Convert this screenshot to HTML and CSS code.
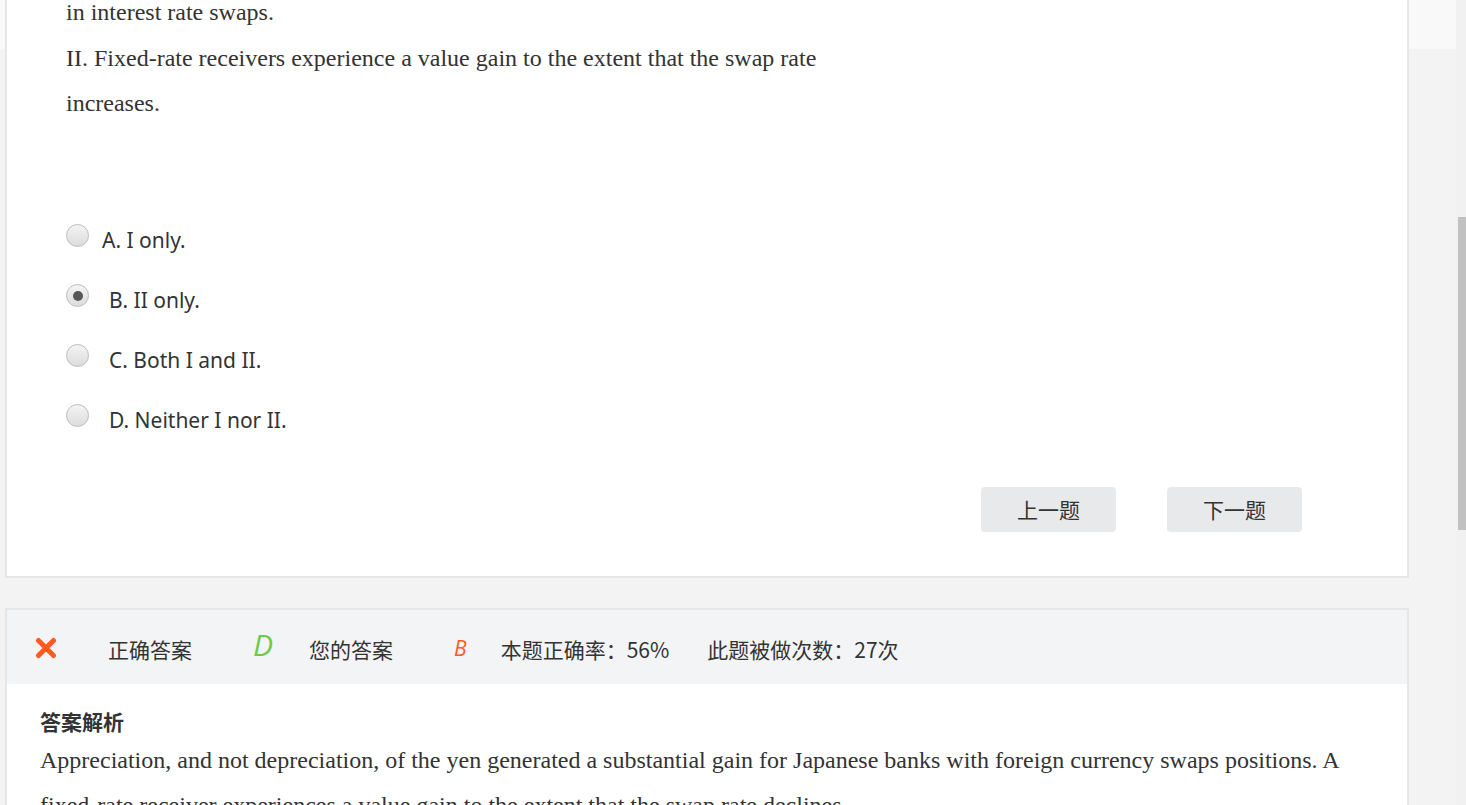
FILE: index.html
```html
<!DOCTYPE html>
<html lang="zh-CN">
<head>
    <meta charset="UTF-8">
    <meta name="viewport" content="width=device-width, initial-scale=1.0">
    <title>练习题</title>
    <link rel="stylesheet" href="styles.css">
</head>
<body>
    <div class="page">
        <!-- 题目 -->
        <div class="quiz-card">
            <div class="question">
                <p>in interest rate swaps.</p>
                <p>II. Fixed-rate receivers experience a value gain to the extent that the swap rate</p>
                <p>increases.</p>
            </div>

            <ul class="options">
                <li><span class="radio"></span><span class="opt-text">A. I only.</span></li>
                <li><span class="radio checked"></span><span class="opt-text pad">B. II only.</span></li>
                <li><span class="radio"></span><span class="opt-text pad">C. Both I and II.</span></li>
                <li><span class="radio"></span><span class="opt-text pad">D. Neither I nor II.</span></li>
            </ul>

            <div class="nav-buttons">
                <button class="nav-btn">上一题</button>
                <button class="nav-btn">下一题</button>
            </div>
        </div>

        <!-- 答案 -->
        <div class="answer-card">
            <div class="answer-bar">
                <span class="wrong-icon">
                    <svg width="22" height="22" viewBox="0 0 22 22">
                        <path d="M3.5 3.5 L18.5 18.5 M18.5 3.5 L3.5 18.5" stroke="#ff5a1f" stroke-width="5" stroke-linecap="round"/>
                    </svg>
                </span>
                <span class="bar-label">正确答案</span>
                <span class="right-answer">D</span>
                <span class="bar-label mine">您的答案</span>
                <span class="my-answer">B</span>
                <span class="bar-stat">本题正确率：56%</span>
                <span class="bar-stat">此题被做次数：27次</span>
            </div>
            <div class="analysis">
                <h3>答案解析</h3>
                <p>Appreciation, and not depreciation, of the yen generated a substantial gain for Japanese banks with foreign currency swaps positions. A fixed-rate receiver experiences a value gain to the extent that the swap rate declines.</p>
            </div>
        </div>
    </div>

    <div class="scroll-track"><div class="scroll-thumb"></div></div>
</body>
</html>
```

FILE: styles.css
```css
/* Estilos generales */
html, body {
    margin: 0;
    padding: 0;
    height: 100%;
    overflow: hidden;
}

body {
    font-family: "Open Sans", "Noto Sans CJK SC", sans-serif;
    color: #333;
    background: linear-gradient(#f9f9fa 0, #f9f9fa 49px, #f3f3f3 49px);
}

.page {
    width: 1404px;
    margin-left: 5px;
}

/* Tarjeta de la pregunta */
.quiz-card {
    margin-top: -10px;
    background-color: #fff;
    border: 2px solid #e6e6e6;
    border-top: none;
    padding: 0 0 44px 59px;
}

.question p {
    margin: 0;
    font-family: "Liberation Serif", "Noto Sans CJK SC", serif;
    font-size: 24px;
    line-height: 45.5px;
    color: #333;
}

.options {
    list-style: none;
    margin: 83px 0 0 0;
    padding: 0;
}

.options li {
    display: flex;
    align-items: center;
    height: 60px;
}

.radio {
    width: 21px;
    height: 21px;
    border: 1px solid #bdbdbd;
    border-radius: 50%;
    background: linear-gradient(#f4f4f4, #dcdcdc);
    display: flex;
    align-items: center;
    justify-content: center;
    margin-top: -8px;
    flex-shrink: 0;
}

.radio.checked::after {
    content: "";
    width: 10px;
    height: 10px;
    border-radius: 50%;
    background-color: #575757;
}

.opt-text {
    font-family: "Noto Sans", "Noto Sans CJK SC", sans-serif;
    font-size: 21px;
    margin-left: 13px;
    color: #333;
}

.opt-text.pad {
    margin-left: 20px;
}

.nav-buttons {
    display: flex;
    justify-content: flex-end;
    gap: 51px;
    margin: 37px 105px 0 0;
}

.nav-btn {
    width: 135px;
    height: 45px;
    border: none;
    border-radius: 4px;
    background-color: #e8e9eb;
    font-family: "Noto Sans CJK SC", sans-serif;
    font-size: 21px;
    color: #333;
    cursor: pointer;
}

/* Tarjeta de la respuesta */
.answer-card {
    margin-top: 30px;
    background-color: #fff;
    border: 2px solid #e6e6e6;
    border-bottom: none;
}

.answer-bar {
    display: flex;
    align-items: center;
    box-sizing: border-box;
    height: 74px;
    padding: 5px 0 0 28px;
    background-color: #f3f4f6;
    font-family: "Noto Sans CJK SC", sans-serif;
    font-size: 21px;
    color: #333;
}

.wrong-icon {
    display: flex;
    width: 22px;
    height: 22px;
    margin-top: -2px;
}

.bar-label {
    margin-left: 51px;
}

.bar-label.mine {
    margin-left: 36px;
}

.right-answer {
    font-family: "Open Sans", sans-serif;
    font-style: italic;
    font-size: 30px;
    color: #6ccb4a;
    margin-left: 61px;
    margin-top: -10px;
}

.my-answer {
    font-family: "Open Sans", sans-serif;
    font-style: italic;
    font-size: 21px;
    color: #ff5a1f;
    margin-left: 61px;
    margin-top: -3px;
}

.bar-stat {
    margin-left: 34px;
}

.bar-stat + .bar-stat {
    margin-left: 38px;
}

.analysis {
    padding: 20px 40px 0 33px;
}

.analysis h3 {
    margin: 0;
    font-family: "Noto Sans CJK SC", sans-serif;
    font-size: 21px;
    font-weight: bold;
    line-height: 34px;
}

.analysis p {
    margin: 0;
    font-family: "Liberation Serif", "Noto Sans CJK SC", serif;
    font-size: 24px;
    line-height: 45px;
    color: #333;
}

/* Barra de desplazamiento */
.scroll-track {
    position: fixed;
    top: 0;
    right: 0;
    width: 10px;
    height: 100%;
    background-color: #f1f1f1;
}

.scroll-thumb {
    margin-top: 217px;
    margin-left: 2px;
    height: 313px;
    background-color: #c1c1c1;
}
```
